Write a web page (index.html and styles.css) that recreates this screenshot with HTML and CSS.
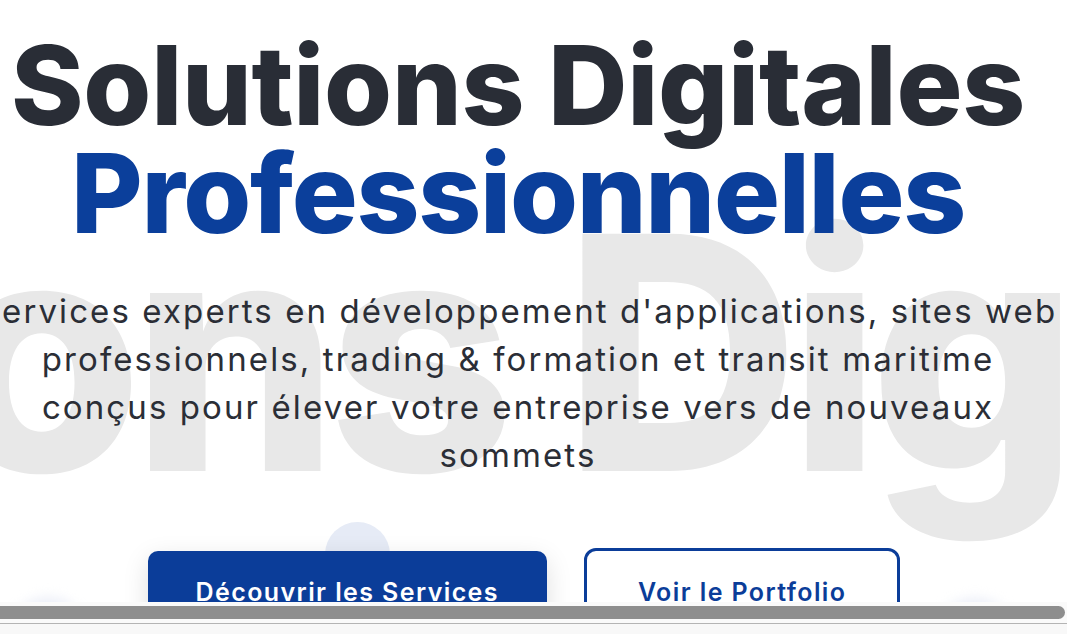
FILE: index.html
```html
<!DOCTYPE html>
<html lang="fr">
<head>
<meta charset="utf-8">
<title>Solutions Digitales Professionnelles</title>
<link rel="stylesheet" href="styles.css">
</head>
<body>
<div class="frame">
  <section class="hero">
    <div class="watermark" aria-hidden="true">Solutions Digitales</div>
    <span class="bubble bubble-a"></span>
    <span class="bubble bubble-b"></span>
    <span class="bubble bubble-c"></span>
    <span class="bubble bubble-d"></span>
    <div class="content">
      <h1 class="title">
        <span class="title-dark">Solutions Digitales</span>
        <span class="title-blue">Professionnelles</span>
      </h1>
      <p class="lead">Services experts en développement d'applications, sites web<br>professionnels, trading &amp; formation et transit maritime<br>conçus pour élever votre entreprise vers de nouveaux<br>sommets</p>
      <div class="actions">
        <a class="btn btn-primary" href="#services">Découvrir les Services</a>
        <a class="btn btn-outline" href="#portfolio">Voir le Portfolio</a>
      </div>
    </div>
  </section>
</div>
<div class="hscroll" aria-hidden="true"><div class="hscroll-thumb"></div></div>
<div class="statusbar"></div>
</body>
</html>
```
FILE: styles.css
```css
html, body {
  margin: 0;
  padding: 0;
}
body {
  background: #ffffff;
  height: 634px;
  overflow: hidden;
  font-family: "Inter", "Liberation Sans", sans-serif;
}
.frame {
  height: 602px;
  overflow: hidden;
  background: #ffffff;
}
.hero {
  position: relative;
  width: 1069px;
  height: 602px;
  overflow: hidden;
  background: #ffffff;
}
.watermark {
  position: absolute;
  top: 190px;
  left: 480px;
  transform: translateX(-50%);
  white-space: nowrap;
  font-size: 326px;
  line-height: 1;
  font-weight: 800;
  color: #e8e8e8;
  letter-spacing: -11px;
  z-index: 0;
}
.bubble {
  position: absolute;
  border-radius: 50%;
  background: #e6ebf6;
  z-index: 0;
}
.bubble-a {
  left: 325px;
  top: 522px;
  width: 65px;
  height: 65px;
}
.bubble-b {
  left: 8px;
  top: 597px;
  width: 80px;
  height: 80px;
  filter: blur(6px);
  background: #eceff8;
}
.bubble-c {
  left: 690px;
  top: 597px;
  width: 70px;
  height: 70px;
  filter: blur(6px);
  background: #eef1f8;
}
.bubble-d {
  left: 930px;
  top: 598px;
  width: 90px;
  height: 90px;
  filter: blur(6px);
  background: #eceff8;
}
.content {
  position: relative;
  z-index: 1;
  width: 1036px;
  padding-top: 31px;
  display: flex;
  flex-direction: column;
  align-items: center;
}
.title {
  margin: 0;
  display: flex;
  flex-direction: column;
  align-items: center;
  font-size: 110px;
  line-height: 108px;
  font-weight: 800;
  white-space: nowrap;
}
.title-dark {
  color: #292d36;
  letter-spacing: -0.3px;
}
.title-blue {
  color: #0b3f9b;
  letter-spacing: -1.3px;
}
.lead {
  margin: 40px 0 0;
  width: max-content;
  text-align: center;
  font-size: 33px;
  line-height: 48px;
  font-weight: 400;
  letter-spacing: 2.1px;
  color: #2b2e36;
  white-space: nowrap;
}
.actions {
  margin-top: 69px;
  margin-left: 12px;
  display: flex;
  align-items: center;
  gap: 37px;
}
.btn {
  display: block;
  padding: 24px 48px;
  font-size: 25px;
  line-height: 35px;
  font-weight: 600;
  letter-spacing: 1.4px;
  text-decoration: none;
  white-space: nowrap;
}
.btn-primary {
  background: #0b3d99;
  color: #ffffff;
  border-radius: 10px;
  box-shadow: 0 8px 26px rgba(0, 0, 0, 0.13);
}
.btn-outline {
  padding-left: 51px;
  padding-right: 51px;
  border: 3px solid #0b3d99;
  color: #0b3d99;
  border-radius: 12px;
  background: #ffffff;
}
.hscroll {
  height: 21px;
  box-sizing: border-box;
  padding: 4px 2px 4px 0;
  background: #fafafa;
}
.hscroll-thumb {
  height: 13px;
  background: #8e8e8e;
  border-radius: 0 7px 7px 0;
}
.statusbar {
  height: 10px;
  border-top: 1px solid #b4b4b4;
  background: #f8f8f8;
}
```
